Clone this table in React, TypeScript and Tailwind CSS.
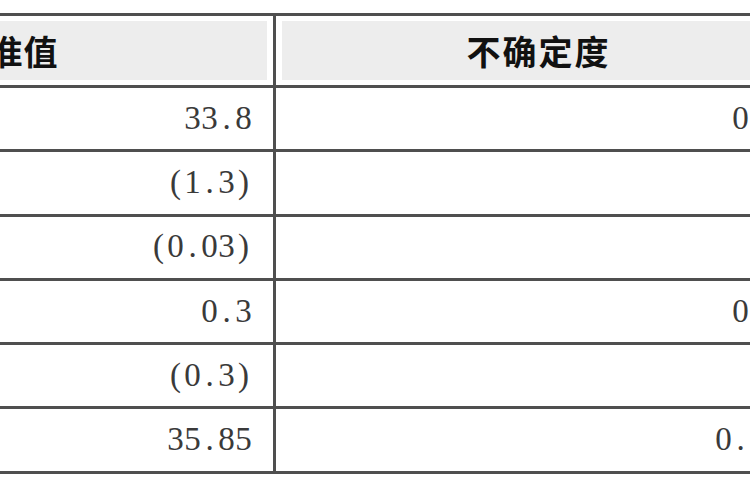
import React from "react";

const rows: [string, string][] = [
  ["33.8", "0.3"],
  ["(1.3)", ""],
  ["(0.03)", ""],
  ["0.3", "0.2"],
  ["(0.3)", ""],
  ["35.85", "0.36"],
];

function Num({ value }: { value: string }) {
  return (
    <span className="inline-flex">
      {value.split("").map((c, i) => (
        <span key={i} className="inline-block w-[17px] text-center">
          {c}
        </span>
      ))}
    </span>
  );
}

export default function App() {
  return (
    <div className="w-[750px] h-[500px] overflow-hidden bg-white pt-[13px]">
      <div className="ml-[-261px] w-[1100px] border-t-[3px] border-[#4f4f4f]">
        <div className="flex h-[72px] border-b-[3px] border-[#4f4f4f]">
          <div className="w-[534px] shrink-0 px-[6px] py-[5px]">
            <div
              className="h-full bg-[#ededed] flex items-center justify-center text-[34px] font-bold text-[#111] tracking-[1px]"
              style={{ fontFamily: '"Noto Sans CJK SC", "Noto Sans", sans-serif' }}
            >
              标准值
            </div>
          </div>
          <div className="w-[528px] shrink-0 border-l-[3px] border-[#4f4f4f] px-[6px] py-[5px]">
            <div
              className="h-full bg-[#ededed] flex items-center justify-center text-[34px] font-bold text-[#111] tracking-[2px]"
              style={{ fontFamily: '"Noto Sans CJK SC", "Noto Sans", sans-serif' }}
            >
              不确定度
            </div>
          </div>
        </div>
        {rows.map(([a, b], i) => (
          <div
            key={i}
            className="flex h-[64.3px] border-b-[3px] border-[#4f4f4f] text-[33px] text-[#3a3a3a]"
            style={{ fontFamily: '"Liberation Serif", serif' }}
          >
            <div className="w-[534px] shrink-0 flex items-center justify-end pr-[21px]">
              <Num value={a} />
            </div>
            <div className="w-[528px] shrink-0 border-l-[3px] border-[#4f4f4f] flex items-center justify-end pr-[18px]">
              <Num value={b} />
            </div>
          </div>
        ))}
      </div>
    </div>
  );
}
